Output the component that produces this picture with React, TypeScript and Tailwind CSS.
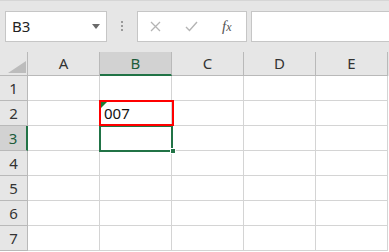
import React from "react";

const COLS = ["A", "B", "C", "D", "E"];
const ROWS = [1, 2, 3, 4, 5, 6, 7];

function TopBar() {
  return (
    <div className="flex h-[52px] items-start bg-[#e6e6e6] border-t border-[#d6d6d6] pt-[10px]">
      {/* Name box */}
      <div className="ml-[5px] flex h-[31px] w-[102px] items-center justify-between border border-[#c6c6c6] bg-white pl-[6px] pr-[6px]">
        <span className="text-[15px] text-[#222]">B3</span>
        <svg width="8" height="5" viewBox="0 0 8 5">
          <path d="M0 0 H8 L4 5 Z" fill="#6a6a6a" />
        </svg>
      </div>
      {/* Grip dots */}
      <div className="ml-[14px] mt-[10px] flex w-[3px] flex-col gap-[2px]">
        <span className="h-[2px] w-[2px] bg-[#9a9a9a]" />
        <span className="h-[2px] w-[2px] bg-[#9a9a9a]" />
        <span className="h-[2px] w-[2px] bg-[#9a9a9a]" />
      </div>
      {/* Formula buttons */}
      <div className="ml-[13px] flex h-[31px] w-[110px] items-center border border-[#c6c6c6] bg-white">
        <svg className="ml-[12px]" width="11" height="11" viewBox="0 0 11 11">
          <path d="M1 1 L10 10 M10 1 L1 10" stroke="#b4b4b4" strokeWidth="1.3" />
        </svg>
        <svg className="ml-[24px]" width="13" height="11" viewBox="0 0 13 11">
          <path d="M1 6 L4.5 9.5 L12 1" stroke="#b4b4b4" strokeWidth="1.4" fill="none" />
        </svg>
        <span className="ml-[24px] font-['Liberation_Serif',serif] text-[15px] italic text-[#555]">
          f<span className="text-[12px]">x</span>
        </span>
      </div>
      {/* Formula input */}
      <div className="ml-[4px] h-[31px] flex-1 border border-r-0 border-[#c6c6c6] bg-white" />
    </div>
  );
}

function HeaderRow() {
  return (
    <div className="flex h-[24px] bg-[#e6e6e6]">
      <div className="relative w-[28px] shrink-0 border-r border-b border-[#b9b9b9]">
        <svg className="absolute left-[8px] top-[9px]" width="18" height="12" viewBox="0 0 18 12">
          <path d="M18 0 L18 12 L0 12 Z" fill="#bcbcbc" />
        </svg>
      </div>
      {COLS.map((c) => (
        <div
          key={c}
          className={
            c === "B"
              ? "flex w-[72px] shrink-0 items-center justify-center border-r border-[#b9b9b9] border-b-2 border-b-[#217346] bg-[#d2d2d2] text-[15px] text-[#1c5c3a]"
              : "flex w-[72px] shrink-0 items-center justify-center border-r border-b border-[#b9b9b9] text-[15px] text-[#333]"
          }
        >
          {c}
        </div>
      ))}
    </div>
  );
}

function Row({ n }: { n: number }) {
  const selected = n === 3;
  return (
    <div className="flex h-[25px]">
      <div
        className={
          selected
            ? "flex w-[28px] shrink-0 items-center justify-center border-b border-b-[#b9b9b9] border-r-2 border-r-[#217346] bg-[#d2d2d2] text-[15px] text-[#1c5c3a]"
            : "flex w-[28px] shrink-0 items-center justify-center border-r border-b border-[#b9b9b9] bg-[#e6e6e6] text-[15px] text-[#333]"
        }
      >
        {n}
      </div>
      {COLS.map((c) => (
        <div
          key={c}
          className="relative flex w-[72px] shrink-0 items-center border-r border-b border-[#d4d4d4] bg-white pl-[4px] text-[15px] text-[#111]"
        >
          {n === 2 && c === "B" && (
            <>
              <svg className="absolute left-[1px] top-[1px]" width="6" height="6" viewBox="0 0 6 6">
                <path d="M0 0 H6 L0 6 Z" fill="#1e7a34" />
              </svg>
              007
            </>
          )}
        </div>
      ))}
    </div>
  );
}

export default function App() {
  return (
    <div className="h-[252px] w-[389px] overflow-hidden bg-white font-['Noto_Sans','Liberation_Sans',sans-serif]">
      <TopBar />
      <div className="relative">
        <HeaderRow />
        {ROWS.map((n) => (
          <Row key={n} n={n} />
        ))}
        {/* Active cell B3 */}
        <div className="pointer-events-none absolute left-[99px] top-[73px] h-[27px] w-[74px] border-2 border-[#217346]" />
        <div className="pointer-events-none absolute left-[170px] top-[96px] h-[6px] w-[6px] border border-white bg-[#217346]" />
        {/* Red highlight around B2 */}
        <div className="pointer-events-none absolute left-[99px] top-[48px] h-[26px] w-[75px] border-2 border-[#ff0000]" />
      </div>
    </div>
  );
}
